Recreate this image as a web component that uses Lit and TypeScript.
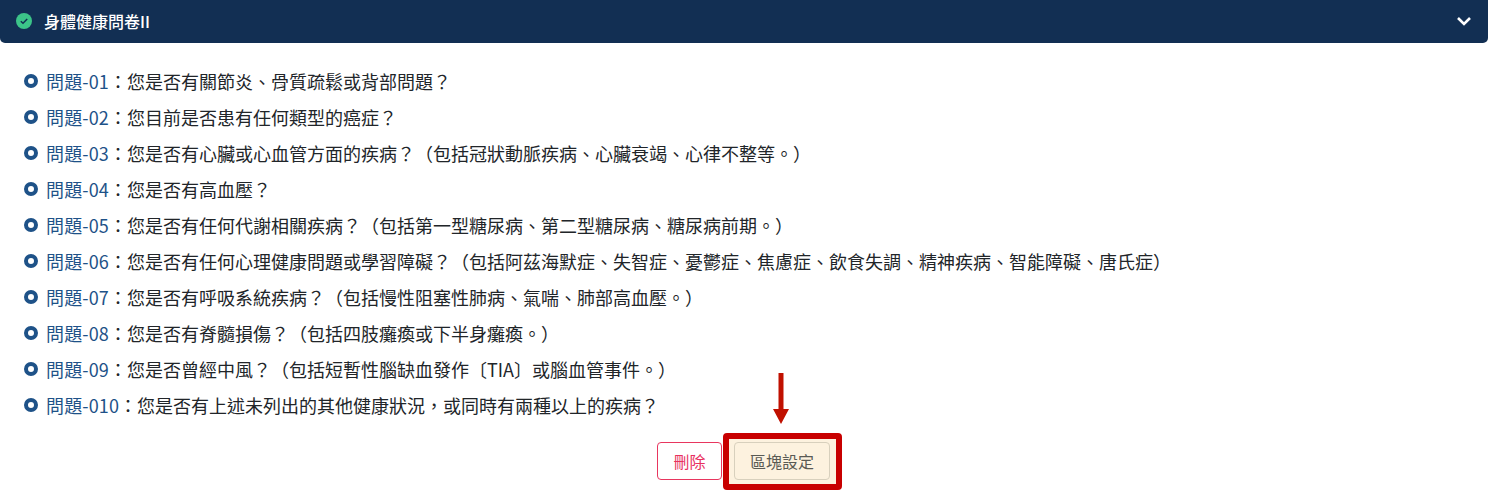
import { LitElement, html, css } from "lit";
import { customElement } from "lit/decorators.js";

const ROWS: [string, string][] = [
  ["問題-01", "您是否有關節炎、骨質疏鬆或背部問題？"],
  ["問題-02", "您目前是否患有任何類型的癌症？"],
  ["問題-03", "您是否有心臟或心血管方面的疾病？（包括冠狀動脈疾病、心臟衰竭、心律不整等。）"],
  ["問題-04", "您是否有高血壓？"],
  ["問題-05", "您是否有任何代謝相關疾病？（包括第一型糖尿病、第二型糖尿病、糖尿病前期。）"],
  ["問題-06", "您是否有任何心理健康問題或學習障礙？（包括阿茲海默症、失智症、憂鬱症、焦慮症、飲食失調、精神疾病、智能障礙、唐氏症）"],
  ["問題-07", "您是否有呼吸系統疾病？（包括慢性阻塞性肺病、氣喘、肺部高血壓。）"],
  ["問題-08", "您是否有脊髓損傷？（包括四肢癱瘓或下半身癱瘓。）"],
  ["問題-09", "您是否曾經中風？（包括短暫性腦缺血發作〔TIA〕或腦血管事件。）"],
  ["問題-010", "您是否有上述未列出的其他健康狀況，或同時有兩種以上的疾病？"],
];

@customElement("app-root")
export class AppRoot extends LitElement {
  static styles = css`
    :host {
      display: block;
      width: 1488px;
      height: 503px;
      overflow: hidden;
      background: #fff;
      font-family: "Noto Sans CJK TC", "Noto Sans", sans-serif;
      color: #212529;
    }
    .header {
      height: 43px;
      box-sizing: border-box;
      background: #122f53;
      border-radius: 0 0 5px 5px;
      display: flex;
      align-items: center;
      padding: 0 16px 2px;
      color: #fff;
      font-size: 16px;
      font-weight: 500;
    }
    .check { width: 16px; height: 16px; margin-right: 12px; flex: none; }
    .title { flex: 1; }
    .chev { width: 16px; height: 16px; flex: none; }
    .list {
      list-style: none;
      margin: 0;
      padding: 20px 24px 0;
    }
    .list li {
      height: 36px;
      display: flex;
      align-items: center;
      font-size: 18px;
      line-height: 36px;
      white-space: nowrap;
    }
    .dot {
      width: 14px;
      height: 14px;
      box-sizing: border-box;
      border: 4px solid #1e5288;
      border-radius: 50%;
      margin-right: 8px;
      flex: none;
    }
    .q { color: #1e5288; letter-spacing: 0.14px; }
    .actions {
      display: flex;
      justify-content: center;
      align-items: center;
      gap: 12px;
      margin-top: 19px;
      padding-right: 1px;
    }
    button {
      font: inherit;
      font-size: 16px;
      border-radius: 4px;
      height: 38px;
      background: #fff;
      cursor: pointer;
      padding: 0;
      box-sizing: border-box;
    }
    .del {
      width: 65px;
      color: #e8305f;
      border: 1px solid #e8365f;
    }
    .wrap {
      position: relative;
      display: flex;
    }
    .frame {
      position: absolute;
      left: -11px;
      right: -12px;
      top: -9px;
      bottom: -10px;
      border: 6px solid #c80000;
      border-radius: 4px;
      background: #fdf2df;
    }
    .set {
      position: relative;
      width: 96px;
      color: #5a5a54;
      background: #fdf2df;
      border: 1px solid #d8d0bd;
    }
    .arrow {
      position: absolute;
      left: 38px;
      top: -69px;
      width: 18px;
      height: 52px;
    }
  `;

  render() {
    return html`
      <div class="header">
        <svg class="check" viewBox="0 0 16 16">
          <circle cx="8" cy="8" r="8" fill="#3cc489" />
          <path d="M4.8 8.2 7 10.3 11.2 6" fill="none" stroke="#122f53" stroke-width="1.5" />
        </svg>
        <span class="title">身體健康問卷II</span>
        <svg class="chev" viewBox="0 0 16 16">
          <path d="M2 5 8 11 14 5" fill="none" stroke="#fff" stroke-width="2.6" />
        </svg>
      </div>
      <ul class="list">
        ${ROWS.map(
          ([q, t]) => html`<li><span class="dot"></span><span class="q">${q}</span><span>：${t}</span></li>`
        )}
      </ul>
      <div class="actions">
        <button class="del">刪除</button>
        <div class="wrap">
          <div class="frame"></div>
          <svg class="arrow" viewBox="0 0 18 52">
            <path d="M9 0V37" stroke="#c01000" stroke-width="5" fill="none" />
            <path d="M1 36H17L9 51Z" fill="#c01000" />
          </svg>
          <button class="set">區塊設定</button>
        </div>
      </div>
    `;
  }
}
